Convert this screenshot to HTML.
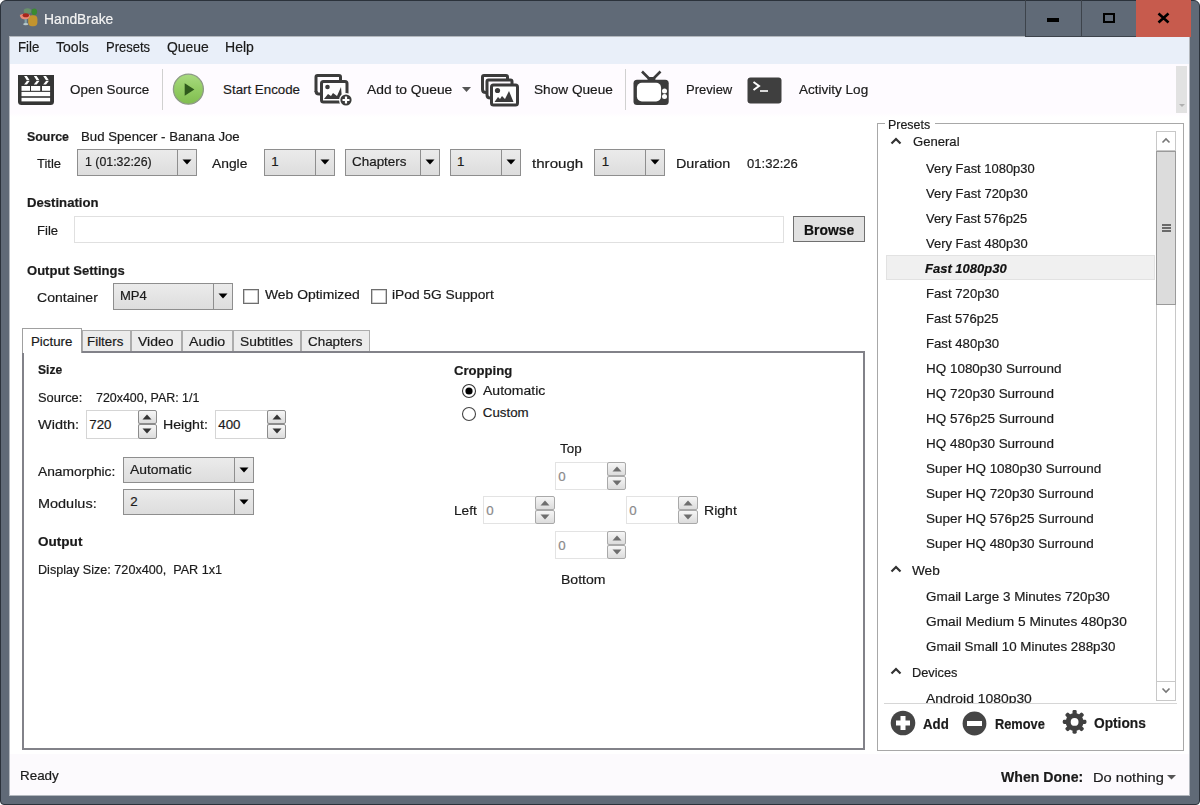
<!DOCTYPE html><html><head><meta charset="utf-8"><style>
html,body{margin:0;padding:0;}
body{width:1200px;height:805px;overflow:hidden;position:relative;background:#fff;font-family:"Liberation Sans",sans-serif;}
.a{position:absolute;}
.t{position:absolute;white-space:nowrap;transform-origin:0 0;-webkit-text-stroke:0.2px currentColor;}
</style></head><body>
<div class="a" style="left:0px;top:0px;width:1200px;height:805px;background:#606a77;border:1px solid #2b323b;box-sizing:border-box;border-radius:6px 6px 4px 4px;"></div>
<div class="a" style="left:10px;top:37px;width:1179px;height:758px;background:#fff;"></div>
<div class="a" style="left:9px;top:37px;width:1px;height:759px;background:#b3b8be;"></div>
<div class="a" style="left:1189px;top:37px;width:1px;height:759px;background:#b3b8be;"></div>
<div class="a" style="left:9px;top:795px;width:1181px;height:1px;background:#b3b8be;"></div>
<div class="a" style="left:9px;top:36px;width:1016px;height:1px;background:#b3b8be;"></div>
<svg class="a" style="left:16px;top:5px" width="26" height="25" viewBox="0 0 26 25">
<defs><filter id="bl" x="-20%" y="-20%" width="140%" height="140%"><feGaussianBlur stdDeviation="0.45"/></filter></defs>
<g filter="url(#bl)">
<ellipse cx="11.5" cy="6" rx="3.8" ry="2.8" fill="#6b9668" opacity="0.85"/>
<ellipse cx="18.3" cy="6.8" rx="2.8" ry="3.4" fill="#3b8a30"/>
<rect x="12.2" y="10.2" width="9.2" height="11" rx="4" fill="#c3942f"/>
<path d="M3.8 10 Q9 7.5 14 10 Q13.5 14.5 8.8 14.5 Q4.2 14 3.8 10Z" fill="#e98b78"/>
<ellipse cx="9.8" cy="10.2" rx="3.2" ry="2" fill="#a8261a"/>
<rect x="8.6" y="14.2" width="2.2" height="4.5" fill="#86a4a8"/>
<ellipse cx="9.7" cy="19.2" rx="2.5" ry="1.1" fill="#b8c8cc"/>
</g></svg>
<div class="t" style="left:43.80px;top:9.04px;font-size:15.00px;line-height:20px;color:#f4f4f4;transform:scaleX(0.923);">HandBrake</div>
<div class="a" style="left:1025px;top:0px;width:1px;height:37px;background:#3d434b;"></div>
<div class="a" style="left:1081px;top:0px;width:1px;height:37px;background:#3d434b;"></div>
<div class="a" style="left:1025px;top:36px;width:111px;height:1px;background:#3d434b;"></div>
<div class="a" style="left:1136px;top:0px;width:55px;height:37px;background:#c75b4d;"></div>
<div class="a" style="left:1047px;top:18px;width:12px;height:4px;background:#000;"></div>
<div class="a" style="left:1103px;top:13px;width:12px;height:10px;border:2px solid #000;box-sizing:border-box;"></div>
<svg class="a" style="left:1157px;top:12px" width="13" height="12"><path d="M1.5 1.5 L11.5 10.5 M11.5 1.5 L1.5 10.5" stroke="#000" stroke-width="2.6"/></svg>
<div class="a" style="left:10px;top:37px;width:1179px;height:27px;background:#e9eff9;"></div>
<div class="t" style="left:18.05px;top:38.31px;font-size:14.50px;line-height:19px;color:#1b1b1b;transform:scaleX(0.912);">File</div>
<div class="t" style="left:56.30px;top:38.31px;font-size:14.50px;line-height:19px;color:#1b1b1b;transform:scaleX(0.969);">Tools</div>
<div class="t" style="left:105.70px;top:38.31px;font-size:14.50px;line-height:19px;color:#1b1b1b;transform:scaleX(0.897);">Presets</div>
<div class="t" style="left:166.55px;top:38.31px;font-size:14.50px;line-height:19px;color:#1b1b1b;transform:scaleX(0.959);">Queue</div>
<div class="t" style="left:225.20px;top:38.31px;font-size:14.50px;line-height:19px;color:#1b1b1b;transform:scaleX(0.967);">Help</div>
<div class="a" style="left:10px;top:64px;width:1179px;height:49px;background:#fefbff;"></div>
<div class="a" style="left:10px;top:113px;width:1179px;height:4px;background:linear-gradient(#fefbff,#fff);"></div>
<div class="a" style="left:1176px;top:66px;width:11px;height:47px;background:#e2e2e2;"></div>
<svg class="a" style="left:1179px;top:104px" width="6" height="4"><path d="M0 0 L6 0 L3 3Z" fill="#b0b0b0"/></svg>
<div class="a" style="left:162px;top:69px;width:1px;height:41px;background:#d0d0d0;"></div>
<div class="a" style="left:625px;top:69px;width:1px;height:41px;background:#d0d0d0;"></div>
<svg class="a" style="left:18px;top:75px" width="36" height="30" viewBox="0 0 36 30">
<path d="M0 0 L36 0 L36 26.5 Q36 30 32.5 30 L3.5 30 Q0 30 0 26.5Z" fill="#353535"/>
<path d="M6.1 1.1 L8.9 1.1 L11.6 5.3 L8.8 5.3Z M8.8 6 L11.6 6 L9 9.4 L6.1 9.4Z M15.8 1.1 L18.6 1.1 L21.4 5.3 L18.6 5.3Z M18.6 6 L21.4 6 L18.7 9.4 L15.8 9.4Z M25.2 1.1 L28 1.1 L30.8 5.3 L28 5.3Z M28 6 L30.8 6 L28.1 9.4 L25.2 9.4Z" fill="#fff"/>
<rect x="3.5" y="11" width="8.5" height="4.8" fill="#fff"/>
<rect x="13" y="11" width="9.2" height="4.8" fill="#fff"/>
<rect x="24" y="11" width="8.1" height="4.8" fill="#fff"/>
<rect x="3.5" y="16.9" width="28.6" height="4.3" fill="#fff"/>
<rect x="3.5" y="22.8" width="28.6" height="3.6" fill="#fff"/>
</svg>
<div class="t" style="left:70.30px;top:81.10px;font-size:13.30px;line-height:17px;color:#1b1b1b;transform:scaleX(1.010);">Open Source</div>
<svg class="a" style="left:172px;top:73px" width="33" height="33" viewBox="0 0 33 33">
<defs><linearGradient id="pg" x1="0" y1="0" x2="0" y2="1"><stop offset="0" stop-color="#a9da80"/><stop offset="0.5" stop-color="#93cc64"/><stop offset="1" stop-color="#80bd4f"/></linearGradient></defs>
<circle cx="16.4" cy="16.2" r="15" fill="url(#pg)" stroke="#8d9a86" stroke-width="1.3"/>
<path d="M12.7 10.2 L22.4 16.4 L12.7 22.7Z" fill="#2f5a1c"/>
</svg>
<div class="t" style="left:223.10px;top:81.10px;font-size:13.30px;line-height:17px;color:#1b1b1b;">Start Encode</div>
<svg class="a" style="left:313px;top:73px" width="42" height="34" viewBox="0 0 42 34">
<path d="M3 19 L3 4 Q3 2.5 4.5 2.5 L26 2.5 Q27.5 2.5 27.5 4 L27.5 7" fill="none" stroke="#3b3b3b" stroke-width="3"/>
<path d="M3 18 Q3 21 6 21 L8 21" fill="none" stroke="#3b3b3b" stroke-width="3"/>
<rect x="8.5" y="8.5" width="25.5" height="20.5" rx="2" fill="#fff" stroke="#3b3b3b" stroke-width="3"/>
<circle cx="14.5" cy="14" r="2.3" fill="#3b3b3b"/>
<path d="M11 26 L15 21 L18 23 L20 20 L24 23 L28 14 L29 26Z" fill="#3b3b3b"/>
<circle cx="33" cy="27" r="7" fill="#fff"/>
<circle cx="33" cy="27" r="5.6" fill="#3b3b3b"/>
<path d="M33 23.5 L33 30.5 M29.5 27 L36.5 27" stroke="#fff" stroke-width="2.2"/>
</svg>
<div class="t" style="left:367.30px;top:81.40px;font-size:13.30px;line-height:17px;color:#1b1b1b;transform:scaleX(1.039);">Add to Queue</div>
<svg class="a" style="left:461px;top:86px" width="11" height="7"><path d="M1 1 L10 1 L5.5 6Z" fill="#555"/></svg>
<svg class="a" style="left:480px;top:73px" width="40" height="34" viewBox="0 0 40 34">
<path d="M6 19.5 Q2.5 19.5 2.5 16.5 L2.5 4 Q2.5 2.5 4 2.5 L26 2.5 Q27.5 2.5 27.5 4 L27.5 6" fill="none" stroke="#3b3b3b" stroke-width="3"/>
<path d="M10.5 25 Q7 25 7 22 L7 8.5 Q7 7 8.5 7 L30.5 7 Q32 7 32 8.5 L32 11" fill="none" stroke="#3b3b3b" stroke-width="3"/>
<rect x="11.5" y="12" width="26" height="20" rx="2" fill="#fff" stroke="#3b3b3b" stroke-width="3"/>
<circle cx="17.5" cy="17.5" r="2.6" fill="#3b3b3b"/>
<path d="M14.5 29 L18 24 L20 26 L22 23 L25 26 L29 18 L33.5 29Z" fill="#3b3b3b"/>
</svg>
<div class="t" style="left:534.30px;top:81.40px;font-size:13.30px;line-height:17px;color:#1b1b1b;transform:scaleX(1.025);">Show Queue</div>
<svg class="a" style="left:632px;top:70px" width="38" height="36" viewBox="0 0 38 36">
<path d="M10 1.5 L17.5 9 M28.5 1.5 L21 9" fill="none" stroke="#3b3b3b" stroke-width="2.6"/>
<rect x="15.5" y="7" width="8" height="4" rx="2" fill="#3b3b3b"/>
<rect x="1.5" y="9.8" width="35.2" height="25.1" rx="3.5" fill="#3b3b3b"/>
<rect x="4.9" y="12.7" width="24.2" height="18.8" rx="5" fill="#fff"/>
<circle cx="32.5" cy="20.9" r="2.5" fill="#fff"/>
<circle cx="32.5" cy="26.5" r="2.5" fill="#fff"/>
</svg>
<div class="t" style="left:686.05px;top:81.10px;font-size:13.30px;line-height:17px;color:#1b1b1b;transform:scaleX(0.978);">Preview</div>
<svg class="a" style="left:747px;top:77px" width="35" height="27" viewBox="0 0 35 27">
<rect x="0.5" y="0.5" width="34" height="26" rx="3" fill="#3f3f3f"/>
<path d="M6.5 5 L12 9 L6.5 13" fill="none" stroke="#fff" stroke-width="2"/>
<rect x="13" y="13.2" width="8" height="1.6" fill="#fff"/>
</svg>
<div class="t" style="left:798.90px;top:81.20px;font-size:13.30px;line-height:17px;color:#1b1b1b;transform:scaleX(1.017);">Activity Log</div>
<div class="t" style="left:26.80px;top:127.90px;font-size:13.30px;line-height:17px;color:#1b1b1b;font-weight:bold;transform:scaleX(0.932);">Source</div>
<div class="t" style="left:81.30px;top:127.90px;font-size:13.30px;line-height:17px;color:#1b1b1b;transform:scaleX(0.994);">Bud Spencer - Banana Joe</div>
<div class="t" style="left:36.80px;top:155.10px;font-size:13.30px;line-height:17px;color:#1b1b1b;transform:scaleX(0.979);">Title</div>
<div class="a" style="left:77px;top:149px;width:120px;height:27px;background:linear-gradient(#ebebeb,#dddddd);border:1px solid #8e8e8e;box-sizing:border-box;"></div>
<div class="a" style="left:177px;top:149px;width:1px;height:27px;background:#8e8e8e;"></div>
<svg class="a" style="left:181px;top:158px" width="12" height="8"><path d="M1.5 1.5 L10.5 1.5 L6 6.5 Z" fill="#000"/></svg>
<div class="t" style="left:85.10px;top:153.10px;font-size:13.30px;line-height:17px;color:#1b1b1b;transform:scaleX(0.930);">1 (01:32:26)</div>
<div class="t" style="left:212.20px;top:155.10px;font-size:13.30px;line-height:17px;color:#1b1b1b;transform:scaleX(1.040);">Angle</div>
<div class="a" style="left:264px;top:149px;width:71px;height:27px;background:linear-gradient(#ebebeb,#dddddd);border:1px solid #8e8e8e;box-sizing:border-box;"></div>
<div class="a" style="left:315px;top:149px;width:1px;height:27px;background:#8e8e8e;"></div>
<svg class="a" style="left:319px;top:158px" width="12" height="8"><path d="M1.5 1.5 L10.5 1.5 L6 6.5 Z" fill="#000"/></svg>
<div class="t" style="left:271.20px;top:153.10px;font-size:13.30px;line-height:17px;color:#1b1b1b;">1</div>
<div class="a" style="left:345px;top:149px;width:95px;height:27px;background:linear-gradient(#ebebeb,#dddddd);border:1px solid #8e8e8e;box-sizing:border-box;"></div>
<div class="a" style="left:420px;top:149px;width:1px;height:27px;background:#8e8e8e;"></div>
<svg class="a" style="left:424px;top:158px" width="12" height="8"><path d="M1.5 1.5 L10.5 1.5 L6 6.5 Z" fill="#000"/></svg>
<div class="t" style="left:351.80px;top:153.10px;font-size:13.30px;line-height:17px;color:#1b1b1b;transform:scaleX(1.010);">Chapters</div>
<div class="a" style="left:450px;top:149px;width:71px;height:27px;background:linear-gradient(#ebebeb,#dddddd);border:1px solid #8e8e8e;box-sizing:border-box;"></div>
<div class="a" style="left:501px;top:149px;width:1px;height:27px;background:#8e8e8e;"></div>
<svg class="a" style="left:505px;top:158px" width="12" height="8"><path d="M1.5 1.5 L10.5 1.5 L6 6.5 Z" fill="#000"/></svg>
<div class="t" style="left:457.00px;top:153.10px;font-size:13.30px;line-height:17px;color:#1b1b1b;">1</div>
<div class="t" style="left:531.60px;top:155.10px;font-size:13.30px;line-height:17px;color:#1b1b1b;transform:scaleX(1.136);">through</div>
<div class="a" style="left:594px;top:149px;width:71px;height:27px;background:linear-gradient(#ebebeb,#dddddd);border:1px solid #8e8e8e;box-sizing:border-box;"></div>
<div class="a" style="left:645px;top:149px;width:1px;height:27px;background:#8e8e8e;"></div>
<svg class="a" style="left:649px;top:158px" width="12" height="8"><path d="M1.5 1.5 L10.5 1.5 L6 6.5 Z" fill="#000"/></svg>
<div class="t" style="left:601.80px;top:153.10px;font-size:13.30px;line-height:17px;color:#1b1b1b;">1</div>
<div class="t" style="left:676.30px;top:155.10px;font-size:13.30px;line-height:17px;color:#1b1b1b;transform:scaleX(1.080);">Duration</div>
<div class="t" style="left:747.30px;top:155.10px;font-size:13.30px;line-height:17px;color:#1b1b1b;transform:scaleX(0.981);">01:32:26</div>
<div class="t" style="left:27.05px;top:194.35px;font-size:13.30px;line-height:17px;color:#1b1b1b;font-weight:bold;transform:scaleX(0.988);">Destination</div>
<div class="t" style="left:36.80px;top:221.50px;font-size:13.30px;line-height:17px;color:#1b1b1b;transform:scaleX(0.983);">File</div>
<div class="a" style="left:74px;top:216px;width:710px;height:27px;background:#fff;border:1px solid #e0e0e0;box-sizing:border-box;"></div>
<div class="a" style="left:793px;top:216px;width:72px;height:26px;background:#e1e1e1;border:1px solid #707070;box-sizing:border-box;"></div>
<div class="t" style="left:804.00px;top:221.37px;font-size:14.00px;line-height:18px;color:#111;font-weight:bold;transform:scaleX(0.991);">Browse</div>
<div class="t" style="left:27.30px;top:261.50px;font-size:13.30px;line-height:17px;color:#1b1b1b;font-weight:bold;transform:scaleX(0.980);">Output Settings</div>
<div class="t" style="left:36.90px;top:289.10px;font-size:13.30px;line-height:17px;color:#1b1b1b;transform:scaleX(1.055);">Container</div>
<div class="a" style="left:113px;top:283px;width:120px;height:27px;background:linear-gradient(#ebebeb,#dddddd);border:1px solid #8e8e8e;box-sizing:border-box;"></div>
<div class="a" style="left:213px;top:283px;width:1px;height:27px;background:#8e8e8e;"></div>
<svg class="a" style="left:217px;top:292px" width="12" height="8"><path d="M1.5 1.5 L10.5 1.5 L6 6.5 Z" fill="#000"/></svg>
<div class="t" style="left:120.30px;top:286.50px;font-size:13.30px;line-height:17px;color:#1b1b1b;transform:scaleX(0.981);">MP4</div>
<div class="a" style="left:243px;top:289px;width:16px;height:15px;background:#fff;border:1px solid #6e6e6e;box-shadow:inset 0 0 0 0.6px #aaa;box-sizing:border-box;"></div>
<div class="t" style="left:264.70px;top:286.10px;font-size:13.30px;line-height:17px;color:#1b1b1b;transform:scaleX(1.045);">Web Optimized</div>
<div class="a" style="left:371px;top:289px;width:16px;height:15px;background:#fff;border:1px solid #6e6e6e;box-shadow:inset 0 0 0 0.6px #aaa;box-sizing:border-box;"></div>
<div class="t" style="left:391.90px;top:286.10px;font-size:13.30px;line-height:17px;color:#1b1b1b;transform:scaleX(1.035);">iPod 5G Support</div>
<div class="a" style="left:82px;top:330px;width:49px;height:22px;background:#ececec;border:1px solid #acacac;border-bottom:none;box-sizing:border-box;"></div>
<div class="t" style="left:87.10px;top:332.90px;font-size:13.30px;line-height:17px;color:#1b1b1b;">Filters</div>
<div class="a" style="left:131px;top:330px;width:51px;height:22px;background:#ececec;border:1px solid #acacac;border-bottom:none;box-sizing:border-box;"></div>
<div class="t" style="left:137.60px;top:332.90px;font-size:13.30px;line-height:17px;color:#1b1b1b;transform:scaleX(1.051);">Video</div>
<div class="a" style="left:182px;top:330px;width:51px;height:22px;background:#ececec;border:1px solid #acacac;border-bottom:none;box-sizing:border-box;"></div>
<div class="t" style="left:188.50px;top:332.90px;font-size:13.30px;line-height:17px;color:#1b1b1b;transform:scaleX(1.066);">Audio</div>
<div class="a" style="left:233px;top:330px;width:68px;height:22px;background:#ececec;border:1px solid #acacac;border-bottom:none;box-sizing:border-box;"></div>
<div class="t" style="left:239.60px;top:332.90px;font-size:13.30px;line-height:17px;color:#1b1b1b;transform:scaleX(1.039);">Subtitles</div>
<div class="a" style="left:301px;top:330px;width:69px;height:22px;background:#ececec;border:1px solid #acacac;border-bottom:none;box-sizing:border-box;"></div>
<div class="t" style="left:307.60px;top:332.90px;font-size:13.30px;line-height:17px;color:#1b1b1b;transform:scaleX(1.009);">Chapters</div>
<div class="a" style="left:22px;top:351px;width:843px;height:399px;background:#fff;border:2px solid #828289;box-sizing:border-box;"></div>
<div class="a" style="left:22px;top:328px;width:60px;height:25px;background:#fff;border:1px solid #a0a0a0;border-bottom:none;box-sizing:border-box;"></div>
<div class="t" style="left:31.00px;top:332.90px;font-size:13.30px;line-height:17px;color:#1b1b1b;">Picture</div>
<div class="t" style="left:37.60px;top:361.30px;font-size:13.30px;line-height:17px;color:#1b1b1b;font-weight:bold;transform:scaleX(0.910);">Size</div>
<div class="t" style="left:38.05px;top:388.60px;font-size:13.30px;line-height:17px;color:#1b1b1b;transform:scaleX(0.967);">Source:</div>
<div class="t" style="left:95.55px;top:388.60px;font-size:13.30px;line-height:17px;color:#1b1b1b;transform:scaleX(0.934);">720x400, PAR: 1/1</div>
<div class="t" style="left:38.05px;top:415.85px;font-size:13.30px;line-height:17px;color:#1b1b1b;transform:scaleX(1.089);">Width:</div>
<div class="a" style="left:86px;top:410px;width:53px;height:29px;background:#fff;border:1px solid #d5d5d5;box-sizing:border-box;"></div>
<div class="a" style="left:138px;top:410px;width:19px;height:14px;background:linear-gradient(#f6f6f6,#dcdcdc);border:1px solid #8c8c8c;box-sizing:border-box;border-radius:2px;"></div>
<svg class="a" style="left:142px;top:414px" width="10" height="6"><path d="M0.5 5.5 L9.5 5.5 L5 0.5 Z" fill="#333"/></svg>
<div class="a" style="left:138px;top:424px;width:19px;height:15px;background:linear-gradient(#f6f6f6,#dcdcdc);border:1px solid #8c8c8c;box-sizing:border-box;border-radius:2px;"></div>
<svg class="a" style="left:142px;top:428px" width="10" height="6"><path d="M0.5 0.5 L9.5 0.5 L5 5.5 Z" fill="#333"/></svg>
<div class="t" style="left:89.30px;top:416.10px;font-size:13.30px;line-height:17px;color:#1b1b1b;">720</div>
<div class="t" style="left:163.30px;top:415.85px;font-size:13.30px;line-height:17px;color:#1b1b1b;transform:scaleX(1.065);">Height:</div>
<div class="a" style="left:215px;top:410px;width:53px;height:29px;background:#fff;border:1px solid #d5d5d5;box-sizing:border-box;"></div>
<div class="a" style="left:267px;top:410px;width:19px;height:14px;background:linear-gradient(#f6f6f6,#dcdcdc);border:1px solid #8c8c8c;box-sizing:border-box;border-radius:2px;"></div>
<svg class="a" style="left:272px;top:414px" width="10" height="6"><path d="M0.5 5.5 L9.5 5.5 L5 0.5 Z" fill="#333"/></svg>
<div class="a" style="left:267px;top:424px;width:19px;height:15px;background:linear-gradient(#f6f6f6,#dcdcdc);border:1px solid #8c8c8c;box-sizing:border-box;border-radius:2px;"></div>
<svg class="a" style="left:272px;top:428px" width="10" height="6"><path d="M0.5 0.5 L9.5 0.5 L5 5.5 Z" fill="#333"/></svg>
<div class="t" style="left:218.30px;top:416.10px;font-size:13.30px;line-height:17px;color:#1b1b1b;">400</div>
<div class="t" style="left:37.70px;top:463.10px;font-size:13.30px;line-height:17px;color:#1b1b1b;transform:scaleX(1.036);">Anamorphic:</div>
<div class="a" style="left:123px;top:457px;width:131px;height:26px;background:linear-gradient(#ebebeb,#dddddd);border:1px solid #8e8e8e;box-sizing:border-box;"></div>
<div class="a" style="left:234px;top:457px;width:1px;height:26px;background:#8e8e8e;"></div>
<svg class="a" style="left:238px;top:466px" width="12" height="8"><path d="M1.5 1.5 L10.5 1.5 L6 6.5 Z" fill="#000"/></svg>
<div class="t" style="left:130.30px;top:460.50px;font-size:13.30px;line-height:17px;color:#1b1b1b;transform:scaleX(1.045);">Automatic</div>
<div class="t" style="left:37.70px;top:494.70px;font-size:13.30px;line-height:17px;color:#1b1b1b;transform:scaleX(1.087);">Modulus:</div>
<div class="a" style="left:123px;top:489px;width:131px;height:26px;background:linear-gradient(#ebebeb,#dddddd);border:1px solid #8e8e8e;box-sizing:border-box;"></div>
<div class="a" style="left:234px;top:489px;width:1px;height:26px;background:#8e8e8e;"></div>
<svg class="a" style="left:238px;top:498px" width="12" height="8"><path d="M1.5 1.5 L10.5 1.5 L6 6.5 Z" fill="#000"/></svg>
<div class="t" style="left:130.30px;top:493.10px;font-size:13.30px;line-height:17px;color:#1b1b1b;">2</div>
<div class="t" style="left:37.70px;top:533.10px;font-size:13.30px;line-height:17px;color:#1b1b1b;font-weight:bold;transform:scaleX(1.019);">Output</div>
<div class="t" style="left:37.70px;top:560.80px;font-size:13.30px;line-height:17px;color:#1b1b1b;transform:scaleX(0.948);">Display&nbsp;Size:&nbsp;720x400,&nbsp;&nbsp;PAR&nbsp;1x1</div>
<div class="t" style="left:454.30px;top:361.60px;font-size:13.30px;line-height:17px;color:#1b1b1b;font-weight:bold;transform:scaleX(0.986);">Cropping</div>
<svg class="a" style="left:461px;top:383px" width="16" height="16"><circle cx="8" cy="8" r="6.5" fill="#fff" stroke="#333" stroke-width="1.1"/><circle cx="8" cy="8" r="3.6" fill="#000"/></svg>
<div class="t" style="left:482.80px;top:381.60px;font-size:13.30px;line-height:17px;color:#1b1b1b;transform:scaleX(1.054);">Automatic</div>
<svg class="a" style="left:461px;top:406px" width="16" height="16"><circle cx="8" cy="8" r="6.5" fill="#fff" stroke="#444" stroke-width="1.1"/></svg>
<div class="t" style="left:482.80px;top:404.10px;font-size:13.30px;line-height:17px;color:#1b1b1b;">Custom</div>
<div class="t" style="left:559.80px;top:440.10px;font-size:13.30px;line-height:17px;color:#1b1b1b;transform:scaleX(1.006);">Top</div>
<div class="a" style="left:555px;top:462px;width:53px;height:28px;background:#fff;border:1px solid #e3e3e3;box-sizing:border-box;"></div>
<div class="a" style="left:607px;top:462px;width:19px;height:14px;background:linear-gradient(#f6f6f6,#dcdcdc);border:1px solid #a9a9a9;box-sizing:border-box;border-radius:2px;"></div>
<svg class="a" style="left:612px;top:466px" width="10" height="6"><path d="M0.5 5.5 L9.5 5.5 L5 0.5 Z" fill="#6e6e6e"/></svg>
<div class="a" style="left:607px;top:476px;width:19px;height:14px;background:linear-gradient(#f6f6f6,#dcdcdc);border:1px solid #a9a9a9;box-sizing:border-box;border-radius:2px;"></div>
<svg class="a" style="left:612px;top:480px" width="10" height="6"><path d="M0.5 0.5 L9.5 0.5 L5 5.5 Z" fill="#6e6e6e"/></svg>
<div class="t" style="left:558.30px;top:468.10px;font-size:13.30px;line-height:17px;color:#8a8a8a;">0</div>
<div class="t" style="left:454.30px;top:502.10px;font-size:13.30px;line-height:17px;color:#1b1b1b;transform:scaleX(1.027);">Left</div>
<div class="a" style="left:483px;top:496px;width:53px;height:28px;background:#fff;border:1px solid #e3e3e3;box-sizing:border-box;"></div>
<div class="a" style="left:535px;top:496px;width:20px;height:14px;background:linear-gradient(#f6f6f6,#dcdcdc);border:1px solid #a9a9a9;box-sizing:border-box;border-radius:2px;"></div>
<svg class="a" style="left:540px;top:500px" width="10" height="6"><path d="M0.5 5.5 L9.5 5.5 L5 0.5 Z" fill="#6e6e6e"/></svg>
<div class="a" style="left:535px;top:510px;width:20px;height:14px;background:linear-gradient(#f6f6f6,#dcdcdc);border:1px solid #a9a9a9;box-sizing:border-box;border-radius:2px;"></div>
<svg class="a" style="left:540px;top:514px" width="10" height="6"><path d="M0.5 0.5 L9.5 0.5 L5 5.5 Z" fill="#6e6e6e"/></svg>
<div class="t" style="left:486.30px;top:502.10px;font-size:13.30px;line-height:17px;color:#8a8a8a;">0</div>
<div class="a" style="left:626px;top:496px;width:53px;height:28px;background:#fff;border:1px solid #e3e3e3;box-sizing:border-box;"></div>
<div class="a" style="left:678px;top:496px;width:20px;height:14px;background:linear-gradient(#f6f6f6,#dcdcdc);border:1px solid #a9a9a9;box-sizing:border-box;border-radius:2px;"></div>
<svg class="a" style="left:683px;top:500px" width="10" height="6"><path d="M0.5 5.5 L9.5 5.5 L5 0.5 Z" fill="#6e6e6e"/></svg>
<div class="a" style="left:678px;top:510px;width:20px;height:14px;background:linear-gradient(#f6f6f6,#dcdcdc);border:1px solid #a9a9a9;box-sizing:border-box;border-radius:2px;"></div>
<svg class="a" style="left:683px;top:514px" width="10" height="6"><path d="M0.5 0.5 L9.5 0.5 L5 5.5 Z" fill="#6e6e6e"/></svg>
<div class="t" style="left:629.30px;top:502.10px;font-size:13.30px;line-height:17px;color:#8a8a8a;">0</div>
<div class="t" style="left:703.55px;top:502.10px;font-size:13.30px;line-height:17px;color:#1b1b1b;transform:scaleX(1.056);">Right</div>
<div class="a" style="left:555px;top:531px;width:53px;height:28px;background:#fff;border:1px solid #e3e3e3;box-sizing:border-box;"></div>
<div class="a" style="left:607px;top:531px;width:19px;height:14px;background:linear-gradient(#f6f6f6,#dcdcdc);border:1px solid #a9a9a9;box-sizing:border-box;border-radius:2px;"></div>
<svg class="a" style="left:612px;top:535px" width="10" height="6"><path d="M0.5 5.5 L9.5 5.5 L5 0.5 Z" fill="#6e6e6e"/></svg>
<div class="a" style="left:607px;top:545px;width:19px;height:14px;background:linear-gradient(#f6f6f6,#dcdcdc);border:1px solid #a9a9a9;box-sizing:border-box;border-radius:2px;"></div>
<svg class="a" style="left:612px;top:549px" width="10" height="6"><path d="M0.5 0.5 L9.5 0.5 L5 5.5 Z" fill="#6e6e6e"/></svg>
<div class="t" style="left:558.30px;top:537.10px;font-size:13.30px;line-height:17px;color:#8a8a8a;">0</div>
<div class="t" style="left:560.55px;top:571.35px;font-size:13.30px;line-height:17px;color:#1b1b1b;transform:scaleX(1.057);">Bottom</div>
<div class="a" style="left:877px;top:123px;width:307px;height:628px;border:1px solid #a8a8a8;box-sizing:border-box;"></div>
<div class="a" style="left:885px;top:118px;width:50px;height:12px;background:#fff;"></div>
<div class="t" style="left:887.50px;top:115.70px;font-size:13.30px;line-height:17px;color:#1b1b1b;transform:scaleX(0.936);">Presets</div>
<div class="a" style="left:886px;top:255px;width:269px;height:25px;background:#f0f0f0;border:1px solid #e2e2e2;box-sizing:border-box;"></div>
<svg class="a" style="left:890px;top:137px" width="12" height="8"><path d="M1.5 6.5 L6 2 L10.5 6.5" fill="none" stroke="#333" stroke-width="2.2"/></svg>
<div class="t" style="left:913.20px;top:133.40px;font-size:13.30px;line-height:17px;color:#1b1b1b;transform:scaleX(0.984);">General</div>
<div class="t" style="left:925.60px;top:159.90px;font-size:13.30px;line-height:17px;color:#1b1b1b;transform:scaleX(0.974);">Very Fast 1080p30</div>
<div class="t" style="left:925.60px;top:184.90px;font-size:13.30px;line-height:17px;color:#1b1b1b;transform:scaleX(0.976);">Very Fast 720p30</div>
<div class="t" style="left:925.60px;top:209.90px;font-size:13.30px;line-height:17px;color:#1b1b1b;transform:scaleX(0.971);">Very Fast 576p25</div>
<div class="t" style="left:925.60px;top:234.90px;font-size:13.30px;line-height:17px;color:#1b1b1b;transform:scaleX(0.976);">Very Fast 480p30</div>
<div class="t" style="left:925.30px;top:259.60px;font-size:13.30px;line-height:17px;color:#111;font-weight:bold;font-style:italic;transform:scaleX(0.978);">Fast 1080p30</div>
<div class="t" style="left:925.60px;top:284.90px;font-size:13.30px;line-height:17px;color:#1b1b1b;transform:scaleX(0.990);">Fast 720p30</div>
<div class="t" style="left:925.60px;top:309.90px;font-size:13.30px;line-height:17px;color:#1b1b1b;transform:scaleX(0.980);">Fast 576p25</div>
<div class="t" style="left:925.60px;top:334.90px;font-size:13.30px;line-height:17px;color:#1b1b1b;transform:scaleX(0.990);">Fast 480p30</div>
<div class="t" style="left:925.60px;top:359.90px;font-size:13.30px;line-height:17px;color:#1b1b1b;transform:scaleX(1.012);">HQ 1080p30 Surround</div>
<div class="t" style="left:925.60px;top:384.90px;font-size:13.30px;line-height:17px;color:#1b1b1b;transform:scaleX(1.013);">HQ 720p30 Surround</div>
<div class="t" style="left:925.60px;top:409.90px;font-size:13.30px;line-height:17px;color:#1b1b1b;transform:scaleX(1.013);">HQ 576p25 Surround</div>
<div class="t" style="left:925.60px;top:434.90px;font-size:13.30px;line-height:17px;color:#1b1b1b;transform:scaleX(1.013);">HQ 480p30 Surround</div>
<div class="t" style="left:925.60px;top:459.90px;font-size:13.30px;line-height:17px;color:#1b1b1b;transform:scaleX(1.013);">Super HQ 1080p30 Surround</div>
<div class="t" style="left:925.60px;top:484.90px;font-size:13.30px;line-height:17px;color:#1b1b1b;transform:scaleX(1.013);">Super HQ 720p30 Surround</div>
<div class="t" style="left:925.60px;top:509.90px;font-size:13.30px;line-height:17px;color:#1b1b1b;transform:scaleX(1.013);">Super HQ 576p25 Surround</div>
<div class="t" style="left:925.60px;top:534.90px;font-size:13.30px;line-height:17px;color:#1b1b1b;transform:scaleX(1.013);">Super HQ 480p30 Surround</div>
<svg class="a" style="left:890px;top:565px" width="12" height="8"><path d="M1.5 6.5 L6 2 L10.5 6.5" fill="none" stroke="#333" stroke-width="2.2"/></svg>
<div class="t" style="left:912.30px;top:561.50px;font-size:13.30px;line-height:17px;color:#1b1b1b;transform:scaleX(1.025);">Web</div>
<div class="t" style="left:925.60px;top:587.50px;font-size:13.30px;line-height:17px;color:#1b1b1b;transform:scaleX(1.011);">Gmail Large 3 Minutes 720p30</div>
<div class="t" style="left:925.60px;top:612.50px;font-size:13.30px;line-height:17px;color:#1b1b1b;transform:scaleX(1.029);">Gmail Medium 5 Minutes 480p30</div>
<div class="t" style="left:925.60px;top:637.50px;font-size:13.30px;line-height:17px;color:#1b1b1b;transform:scaleX(1.005);">Gmail Small 10 Minutes 288p30</div>
<svg class="a" style="left:890px;top:667px" width="12" height="8"><path d="M1.5 6.5 L6 2 L10.5 6.5" fill="none" stroke="#333" stroke-width="2.2"/></svg>
<div class="t" style="left:912.30px;top:663.50px;font-size:13.30px;line-height:17px;color:#1b1b1b;transform:scaleX(0.962);">Devices</div>
<div class="a" style="left:886px;top:690px;width:260px;height:13px;overflow:hidden">
<div class="t" style="left:39.60px;top:-0.50px;font-size:13.30px;line-height:17px;color:#1b1b1b;transform:scaleX(1.045);">Android 1080p30</div>
</div>
<div class="a" style="left:884px;top:703px;width:293px;height:1px;background:#d6d6d6;"></div>
<div class="a" style="left:1156px;top:131px;width:20px;height:570px;background:#fff;border:1px solid #c8c8c8;box-sizing:border-box;"></div>
<div class="a" style="left:1156px;top:131px;width:20px;height:20px;background:#fff;border:1px solid #c8c8c8;box-sizing:border-box;"></div>
<svg class="a" style="left:1161px;top:137px" width="10" height="7"><path d="M1.5 5.5 L5 2 L8.5 5.5" fill="none" stroke="#777" stroke-width="1.6"/></svg>
<div class="a" style="left:1156px;top:151px;width:20px;height:154px;background:#dcdcdc;border:1px solid #9a9a9a;box-sizing:border-box;"></div>
<div class="a" style="left:1162px;top:224px;width:9px;height:2px;background:#6a6a6a;"></div>
<div class="a" style="left:1162px;top:227px;width:9px;height:2px;background:#6a6a6a;"></div>
<div class="a" style="left:1162px;top:230px;width:9px;height:2px;background:#6a6a6a;"></div>
<div class="a" style="left:1156px;top:681px;width:20px;height:20px;background:#fff;border:1px solid #c8c8c8;box-sizing:border-box;"></div>
<svg class="a" style="left:1161px;top:687px" width="10" height="7"><path d="M1.5 1.5 L5 5 L8.5 1.5" fill="none" stroke="#777" stroke-width="1.6"/></svg>
<svg class="a" style="left:890px;top:710px" width="26" height="26"><circle cx="13" cy="13" r="12.3" fill="#454545"/><path d="M13 6 L13 20 M6 13 L20 13" stroke="#fff" stroke-width="5"/></svg>
<div class="t" style="left:923.20px;top:715.27px;font-size:14.00px;line-height:18px;color:#1b1b1b;font-weight:bold;transform:scaleX(0.947);">Add</div>
<svg class="a" style="left:962px;top:711px" width="25" height="25"><circle cx="12.5" cy="12.5" r="11.9" fill="#454545"/><rect x="5" y="10" width="15" height="5" fill="#fff"/></svg>
<div class="t" style="left:994.80px;top:715.27px;font-size:14.00px;line-height:18px;color:#1b1b1b;font-weight:bold;transform:scaleX(0.914);">Remove</div>
<svg class="a" style="left:1062px;top:709px" width="26" height="26" viewBox="0 0 26 26">
<g fill="#404040" transform="translate(12.6 12.9)">
<circle r="9"/>
<rect id="tooth" x="-2.1" y="-11.8" width="4.2" height="6" rx="1.4"/>
<use href="#tooth" transform="rotate(45)"/><use href="#tooth" transform="rotate(90)"/><use href="#tooth" transform="rotate(135)"/>
<use href="#tooth" transform="rotate(180)"/><use href="#tooth" transform="rotate(225)"/><use href="#tooth" transform="rotate(270)"/><use href="#tooth" transform="rotate(315)"/>
</g><circle cx="12.6" cy="12.9" r="3.9" fill="#fff"/></svg>
<div class="t" style="left:1094.30px;top:713.97px;font-size:14.00px;line-height:18px;color:#1b1b1b;font-weight:bold;transform:scaleX(0.980);">Options</div>
<div class="a" style="left:10px;top:754px;width:1179px;height:41px;background:#fcfafd;"></div>
<div class="t" style="left:19.90px;top:767.10px;font-size:13.30px;line-height:17px;color:#1b1b1b;transform:scaleX(1.009);">Ready</div>
<div class="t" style="left:1000.70px;top:769.04px;font-size:13.80px;line-height:18px;color:#1b1b1b;font-weight:bold;transform:scaleX(1.021);">When Done:</div>
<div class="t" style="left:1092.60px;top:768.50px;font-size:13.30px;line-height:17px;color:#1b1b1b;transform:scaleX(1.101);">Do nothing</div>
<svg class="a" style="left:1166px;top:774px" width="11" height="7"><path d="M1 1 L10 1 L5.5 5.5Z" fill="#555"/></svg>
</body></html>
